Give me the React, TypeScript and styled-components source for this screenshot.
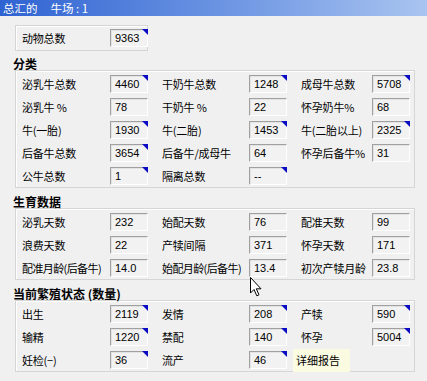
import styled, { createGlobalStyle } from "styled-components";

interface Campo {
  label: string;
  valor: string;
  marca?: boolean;
}

type Fila = (Campo | null)[];

const clasificacion: Fila[] = [
  [
    { label: "泌乳牛总数", valor: "4460", marca: true },
    { label: "干奶牛总数", valor: "1248", marca: true },
    { label: "成母牛总数", valor: "5708", marca: true },
  ],
  [
    { label: "泌乳牛 %", valor: "78" },
    { label: "干奶牛 %", valor: "22" },
    { label: "怀孕奶牛%", valor: "68" },
  ],
  [
    { label: "牛(一胎)", valor: "1930", marca: true },
    { label: "牛(二胎)", valor: "1453", marca: true },
    { label: "牛(二胎以上)", valor: "2325", marca: true },
  ],
  [
    { label: "后备牛总数", valor: "3654", marca: true },
    { label: "后备牛/成母牛", valor: "64" },
    { label: "怀孕后备牛%", valor: "31" },
  ],
  [
    { label: "公牛总数", valor: "1", marca: true },
    { label: "隔离总数", valor: "--", marca: true },
    null,
  ],
];

const reproduccion: Fila[] = [
  [
    { label: "泌乳天数", valor: "232" },
    { label: "始配天数", valor: "76" },
    { label: "配准天数", valor: "99" },
  ],
  [
    { label: "浪费天数", valor: "22" },
    { label: "产犊间隔", valor: "371" },
    { label: "怀孕天数", valor: "171" },
  ],
  [
    { label: "配准月龄(后备牛)", valor: "14.0" },
    { label: "始配月龄(后备牛)", valor: "13.4" },
    { label: "初次产犊月龄", valor: "23.8" },
  ],
];

const estado: Fila[] = [
  [
    { label: "出生", valor: "2119", marca: true },
    { label: "发情", valor: "208", marca: true },
    { label: "产犊", valor: "590", marca: true },
  ],
  [
    { label: "输精", valor: "1220", marca: true },
    { label: "禁配", valor: "140", marca: true },
    { label: "怀孕", valor: "5004", marca: true },
  ],
  [
    { label: "妊检(−)", valor: "36", marca: true },
    { label: "流产", valor: "46", marca: true },
    null,
  ],
];

const GlobalStyle = createGlobalStyle`
  body {
    margin: 0;
    background: #f0f0f0;
    font-family: "Noto Sans CJK SC", "Liberation Sans", sans-serif;
  }
`;

const Window = styled.div`
  position: relative;
  width: 427px;
  height: 381px;
  background: #f0f0f0;
  overflow: hidden;
`;

const TitleBar = styled.div`
  height: 16px;
  line-height: 16px;
  padding-left: 3px;
  font-size: 11.5px;
  color: #ffffff;
  background: linear-gradient(to right, #2f63d2, #6f97e3 55%, #a9c4f0);
`;

const TitleGap = styled.span`
  margin-left: 13px;
`;

const Content = styled.div`
  padding-left: 13px;
`;

const TopBox = styled.div`
  margin: 9px 0 0 2px;
  width: 125px;
  height: 24px;
  padding-left: 6px;
  display: flex;
  align-items: center;
  border: 1px solid #d5d5d5;
  box-shadow: inset 1px 1px 0 #ffffff;
`;

const SectionTitle = styled.div<{ $top: number }>`
  margin-top: ${(p) => p.$top}px;
  height: 13px;
  line-height: 13px;
  font-size: 12px;
  font-weight: bold;
  color: #000;
`;

const Panel = styled.div`
  margin-left: 2px;
  width: 392px;
  padding: 4px 0 2px 6px;
  border: 1px solid #d5d5d5;
  box-shadow: inset 1px 1px 0 #ffffff;
  display: flex;
  flex-direction: column;
  gap: 5px;
`;

const Row = styled.div`
  display: grid;
  grid-template-columns: 126px 125px 109px;
  column-gap: 14px;
`;

const Field = styled.div`
  display: flex;
  align-items: center;
  height: 18px;
`;

const Label = styled.span<{ $compact?: boolean }>`
  flex: 1;
  min-width: 0;
  font-size: 11px;
  white-space: nowrap;
  color: #000;
  letter-spacing: ${(p) => (p.$compact ? "-0.6px" : "-0.2px")};
`;

const TopLabel = styled(Label)`
  flex: none;
  width: 88px;
`;

const ValueBox = styled.div<{ $marca?: boolean }>`
  position: relative;
  flex: none;
  box-sizing: border-box;
  width: 38px;
  height: 18px;
  padding-left: 4px;
  border-top: 1px solid #a0a0a0;
  border-left: 1px solid #a0a0a0;
  border-bottom: 1px solid #ffffff;
  border-right: 1px solid #ffffff;
  box-shadow: inset 1px 1px 0 #e3e3e3;
  background: #f2f2f2;
  font-family: "Liberation Sans", Arial, sans-serif;
  font-size: 11px;
  line-height: 17px;
  color: #000;

  &::after {
    content: "";
    display: ${(p) => (p.$marca ? "block" : "none")};
    position: absolute;
    top: -1px;
    right: -1px;
    border-top: 6px solid #0b0bc4;
    border-left: 6px solid transparent;
  }
`;

const Tooltip = styled.div`
  position: absolute;
  left: 293px;
  top: 349px;
  width: 57px;
  height: 23px;
  padding-left: 3px;
  box-sizing: border-box;
  background: #fbfbe2;
  font-size: 11px;
  line-height: 23px;
  color: #000;
`;

const Cursor = styled.svg`
  position: absolute;
  left: 250px;
  top: 277px;
`;

const Grupo = ({ filas }: { filas: Fila[] }) => (
  <Panel>
    {filas.map((fila, i) => (
      <Row key={i}>
        {fila.map((campo, j) =>
          campo ? (
            <Field key={j}>
              <Label $compact={campo.label.length > 7}>{campo.label}</Label>
              <ValueBox $marca={campo.marca}>{campo.valor}</ValueBox>
            </Field>
          ) : (
            <div key={j} />
          )
        )}
      </Row>
    ))}
  </Panel>
);

export default function App() {
  return (
    <Window>
      <GlobalStyle />
      <TitleBar>
        总汇的<TitleGap>牛场 : 1</TitleGap>
      </TitleBar>
      <Content>
        <TopBox>
          <TopLabel>动物总数</TopLabel>
          <ValueBox $marca>9363</ValueBox>
        </TopBox>

        <SectionTitle $top={6}>分类</SectionTitle>
        <Grupo filas={clasificacion} />

        <SectionTitle $top={7}>生育数据</SectionTitle>
        <Grupo filas={reproduccion} />

        <SectionTitle $top={7}>当前繁殖状态 (数量)</SectionTitle>
        <Grupo filas={estado} />
      </Content>

      <Tooltip>详细报告</Tooltip>

      <Cursor width="13" height="20" viewBox="0 0 13 20">
        <path
          d="M0.5 0.5 L0.5 16 L4 12.5 L6.8 18.8 L9 17.8 L6.3 11.8 L11 11.8 Z"
          fill="#ffffff"
          stroke="#000000"
          strokeWidth="1"
          strokeLinejoin="round"
        />
      </Cursor>
    </Window>
  );
}
